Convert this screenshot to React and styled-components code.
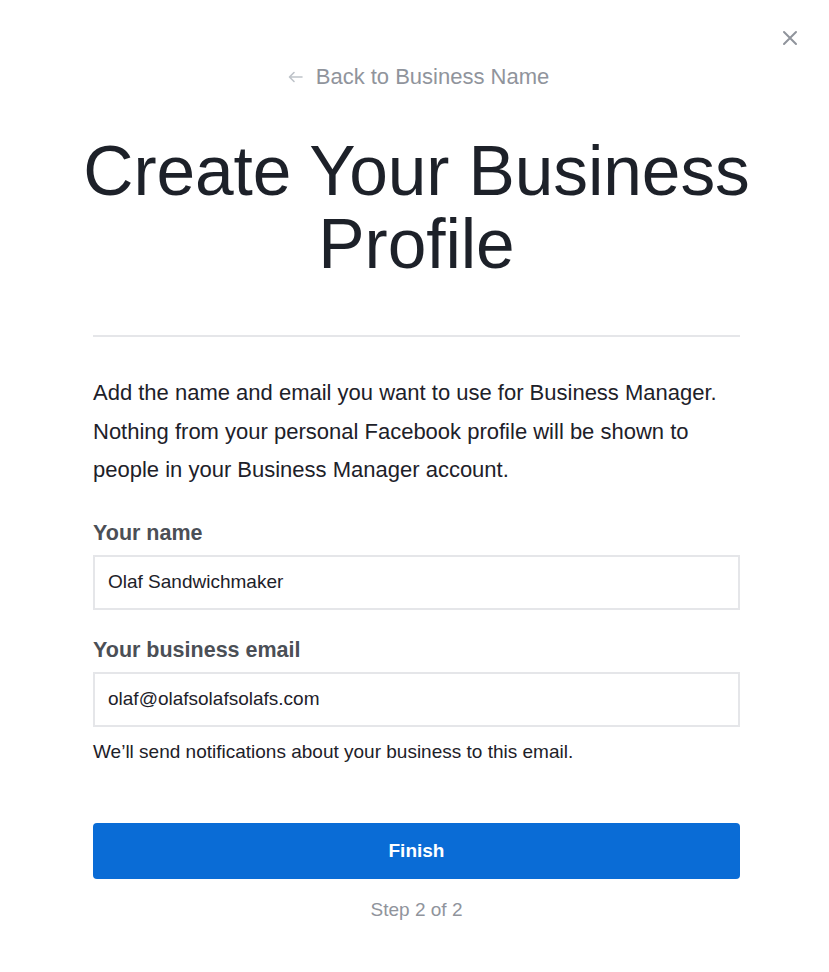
import styled, { createGlobalStyle } from "styled-components";

const GlobalStyle = createGlobalStyle`
  html, body {
    margin: 0;
    padding: 0;
    background: #fff;
  }
  body {
    font-family: "Liberation Sans", Arial, Helvetica, sans-serif;
    color: #1d2129;
  }
  * { box-sizing: border-box; }
`;

const Page = styled.div`
  position: relative;
  width: 829px;
  min-height: 972px;
  background: #fff;
`;

const Close = styled.button`
  position: absolute;
  top: 30px;
  right: 31px;
  width: 16px;
  height: 16px;
  padding: 0;
  border: 0;
  background: none;
  cursor: pointer;
  display: flex;
`;

const Content = styled.div`
  width: 647px;
  margin-left: 93px;
  padding-top: 64px;
  display: flex;
  flex-direction: column;
`;

const BackLink = styled.a`
  align-self: center;
  display: flex;
  align-items: center;
  gap: 13px;
  margin-left: 4px;
  font-size: 22px;
  line-height: 26px;
  color: #90949c;
  text-decoration: none;
  cursor: pointer;
`;

const Title = styled.h1`
  margin: 45px -30px 0;
  font-size: 69.5px;
  line-height: 73px;
  font-weight: 400;
  letter-spacing: -0.1px;
  text-align: center;
  color: #1d2129;
`;

const Divider = styled.hr`
  margin: 54px 0 0;
  border: 0;
  border-top: 2px solid #e5e6e9;
`;

const Intro = styled.p`
  margin: 37px 0 0;
  font-size: 22px;
  line-height: 38.5px;
  color: #1d2129;
`;

const Field = styled.div`
  display: flex;
  flex-direction: column;
  gap: 9px;
  margin-top: ${({ first }) => (first ? "30px" : "27px")};
`;

const Label = styled.label`
  font-size: 21.5px;
  line-height: 26px;
  font-weight: 700;
  color: #4b4f56;
`;

const Input = styled.input`
  width: 100%;
  height: 55px;
  padding: 0 13px;
  border: 2px solid #e5e6e9;
  border-radius: 0;
  font-family: "Liberation Sans", Arial, sans-serif;
  font-size: 19px;
  color: #1d2129;
  outline: none;
`;

const Helper = styled.p`
  margin: 13px 0 0;
  font-size: 19px;
  line-height: 24px;
  color: #1d2129;
`;

const Button = styled.button`
  margin-top: 59px;
  height: 56px;
  border: 0;
  border-radius: 4px;
  background: #0a6cd6;
  color: #fff;
  font-family: "Liberation Sans", Arial, sans-serif;
  font-size: 19px;
  font-weight: 700;
  cursor: pointer;
`;

const Step = styled.div`
  margin-top: 19px;
  text-align: center;
  font-size: 19px;
  line-height: 24px;
  color: #90949c;
`;

export default function App() {
  return (
    <Page>
      <GlobalStyle />
      <Close aria-label="Close">
        <svg width="16" height="16" viewBox="0 0 16 16">
          <path d="M2 2L14 14M14 2L2 14" stroke="#90949c" strokeWidth="2" strokeLinecap="round" />
        </svg>
      </Close>
      <Content>
        <BackLink>
          <svg width="15" height="12" viewBox="0 0 15 12">
            <path d="M14 6H2M6 1.5L1.5 6L6 10.5" stroke="#bec3c9" strokeWidth="1.6" fill="none" strokeLinecap="round" strokeLinejoin="round" />
          </svg>
          Back to Business Name
        </BackLink>
        <Title>Create Your Business Profile</Title>
        <Divider />
        <Intro>
          Add the name and email you want to use for Business Manager. Nothing from your
          personal Facebook profile will be shown to people in your Business Manager account.
        </Intro>
        <Field first>
          <Label>Your name</Label>
          <Input defaultValue="Olaf Sandwichmaker" />
        </Field>
        <Field>
          <Label>Your business email</Label>
          <Input defaultValue="olaf@olafsolafsolafs.com" />
        </Field>
        <Helper>We’ll send notifications about your business to this email.</Helper>
        <Button>Finish</Button>
        <Step>Step 2 of 2</Step>
      </Content>
    </Page>
  );
}
